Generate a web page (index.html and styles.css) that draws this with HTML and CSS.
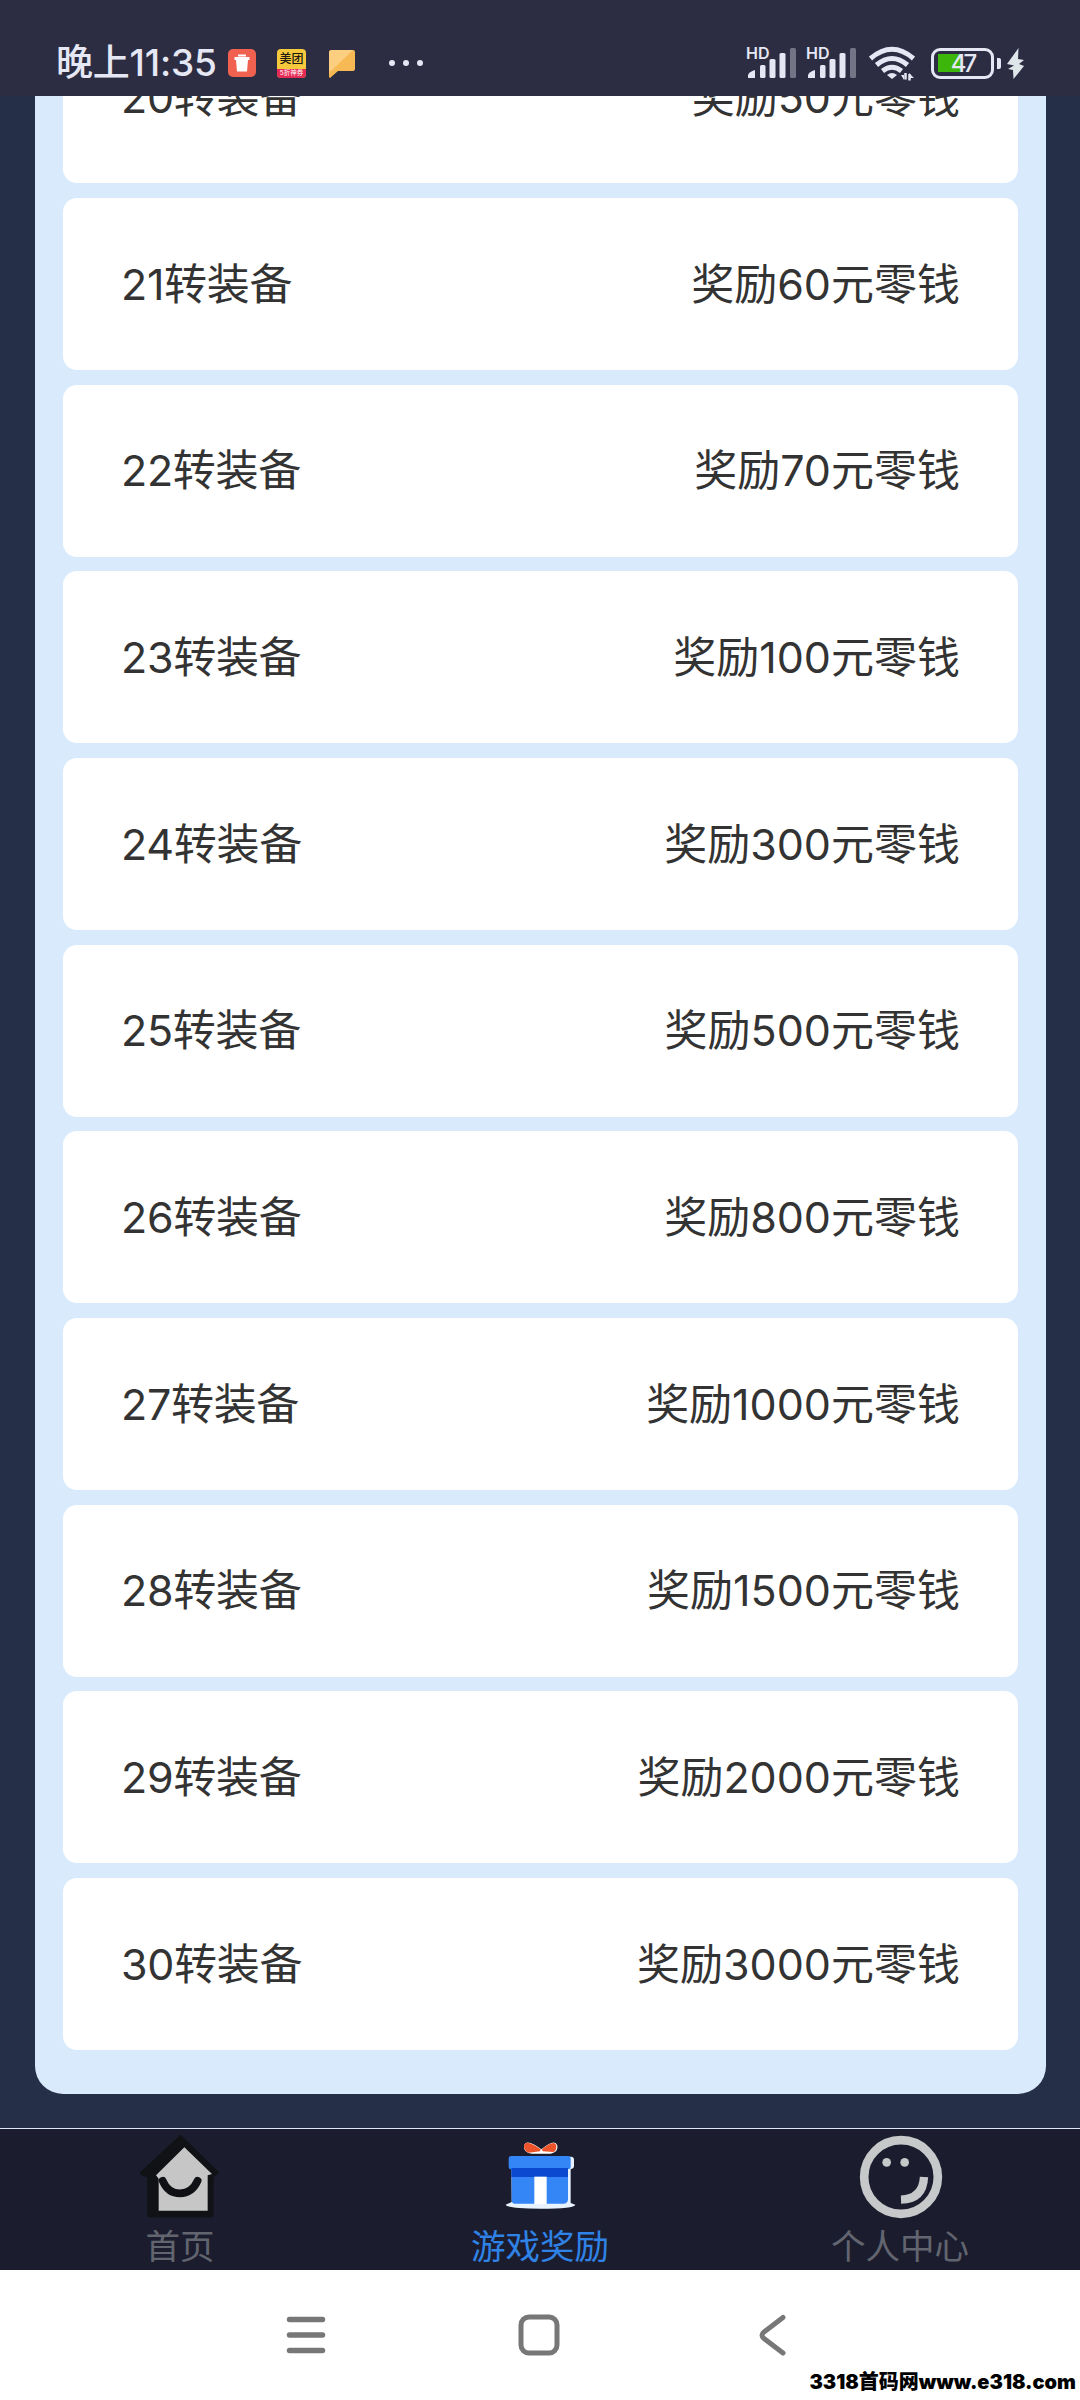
FILE: index.html
```html
<!DOCTYPE html>
<html lang="zh-CN">
<head>
    <meta charset="UTF-8">
    <meta name="viewport" content="width=device-width, initial-scale=1.0">
    <title>游戏奖励</title>
    <link rel="stylesheet" href="styles.css">
</head>
<body>
    <header class="status-bar">
        <span class="time">晚上11:35</span>
        <svg class="app-trash" width="28" height="28" viewBox="0 0 28 28">
            <rect width="28" height="28" rx="5" fill="#f0614f"/>
            <path d="M10 5.500h8v2h-8zM6.500 8h15v3h-1.500l-1 11.500h-10l-1-11.500h-1.500z" fill="#fff"/>
        </svg>
        <div class="app-meituan"><b>美团</b><small>5折神券</small></div>
        <svg class="app-note" width="26" height="29" viewBox="0 0 26 29">
            <path d="M2 1h22a2 2 0 0 1 2 2v17a2 2 0 0 1-2 2H9l-8 7-1-1V3a2 2 0 0 1 2-2z" fill="#f6b954"/>
            <path d="M2 1h22L2 22H0V3z" fill="#fbce80"/>
        </svg>
        <svg class="more" width="34" height="6" viewBox="0 0 34 6" fill="#e6e7f4">
            <circle cx="3" cy="3" r="3"/><circle cx="17" cy="3" r="3"/><circle cx="31" cy="3" r="3"/>
        </svg>

        <div class="status-right">
            <div class="signal">
                <span>HD</span>
                <svg width="50" height="32" viewBox="0 0 50 32" fill="#e6e7f4">
                    <path d="M2 31v-3q1-3 7-5v8z"/>
                    <rect x="14" y="18" width="5.500" height="13" rx="1.500"/>
                    <rect x="23.500" y="12" width="6" height="19" rx="1.500"/>
                    <rect x="33.500" y="6" width="6" height="25" rx="1.500"/>
                    <rect x="44" y="1" width="6" height="30" rx="1.500" fill="#737485"/>
                </svg>
            </div>
            <div class="signal">
                <span>HD</span>
                <svg width="50" height="32" viewBox="0 0 50 32" fill="#e6e7f4">
                    <path d="M2 31v-3q1-3 7-5v8z"/>
                    <rect x="14" y="18" width="5.500" height="13" rx="1.500"/>
                    <rect x="23.500" y="12" width="6" height="19" rx="1.500"/>
                    <rect x="33.500" y="6" width="6" height="25" rx="1.500"/>
                    <rect x="44" y="1" width="6" height="30" rx="1.500" fill="#737485"/>
                </svg>
            </div>
            <svg class="wifi" width="46" height="35" viewBox="0 0 46 35" fill="none" stroke="#e6e7f4" stroke-width="5">
                <path d="M1.500 12.500Q23-6 44.500 12.500"/>
                <path d="M7.500 19Q23 6 38.500 19"/>
                <path d="M13.500 25Q23 17.500 32.500 25"/>
                <path d="M23 33l-5-4q5-4 10 0z" fill="#e6e7f4" stroke="none"/>
                <path d="M36.500 27v6.500M40.500 34.500V28" stroke-width="2.500"/>
                <path d="M32 29h3v5zM45 32l-5-5v5z" fill="#e6e7f4" stroke="none"/>
            </svg>
            <div class="battery"><span>47</span></div>
            <svg class="bolt" width="17" height="31" viewBox="0 0 17 31">
                <path d="M11.500 0L0 16l7 1.500L1 21l5 1 .5 9L17 18l-5-2 5-4-6-1z" fill="#dfe6ea"/>
            </svg>
        </div>
    </header>

    <main class="content">
        <div class="panel">
            <div class="card"><span>20转装备</span><span>奖励50元零钱</span></div>
            <div class="card"><span>21转装备</span><span>奖励60元零钱</span></div>
            <div class="card"><span>22转装备</span><span>奖励70元零钱</span></div>
            <div class="card"><span>23转装备</span><span>奖励100元零钱</span></div>
            <div class="card"><span>24转装备</span><span>奖励300元零钱</span></div>
            <div class="card"><span>25转装备</span><span>奖励500元零钱</span></div>
            <div class="card"><span>26转装备</span><span>奖励800元零钱</span></div>
            <div class="card"><span>27转装备</span><span>奖励1000元零钱</span></div>
            <div class="card"><span>28转装备</span><span>奖励1500元零钱</span></div>
            <div class="card"><span>29转装备</span><span>奖励2000元零钱</span></div>
            <div class="card"><span>30转装备</span><span>奖励3000元零钱</span></div>
        </div>
    </main>

    <nav class="tab-bar">
        <div class="tab">
            <svg width="90" height="90" viewBox="105 57 270 270">
                <path d="M242 82L350 188l-15 10v118H148V198l-22-8z" fill="#111216" stroke="#111216" stroke-width="12" stroke-linejoin="round"/>
                <path d="M253 112l83 80-13 4v106H176V206l-8-10z" fill="#c6c6c6"/>
                <path d="M188 212q16 38 52 38t53-38" fill="none" stroke="#101114" stroke-width="23" stroke-linecap="round"/>
            </svg>
            <span>首页</span>
        </div>
        <div class="tab active">
            <svg width="90" height="90" viewBox="135 57 270 270">
                <path d="M274 118q-45-34-52-11-2 22 24 24h56q24-4 20-25-8-22-48 12z" fill="#fff"/>
                <path d="M272 118q-44-32-50-12 0 20 14 22l34-4zM276 118q36-30 43-12 1 17-9 20l-32-2z" fill="#ee5429"/>
                <path d="M184 140h180q8 1 8 9v20q-1 8-10 8v102l14 5q-3 12-104 12t-105-12l18-8z" fill="#e8f3ff"/>
                <path d="M184 138h170q8 0 8 8v26q0 6-8 6v90q0 12-12 13H195q-10 0-10-12v-91q-9 0-9-8v-24q0-8 8-8z" fill="#3486f7"/>
                <rect x="184" y="174" width="170" height="27" fill="#0b49d0"/>
                <rect x="253" y="200" width="37" height="82" fill="#fff"/>
            </svg>
            <span>游戏奖励</span>
        </div>
        <div class="tab">
            <svg width="90" height="90" viewBox="135 57 270 270" fill="#c6c8ca">
                <circle cx="273" cy="201" r="110.500" fill="none" stroke="#c6c8ca" stroke-width="26"/>
                <circle cx="230" cy="157" r="13"/>
                <circle cx="284" cy="157" r="13"/>
                <path d="M342 201q-3 66-69 68" fill="none" stroke="#c6c8ca" stroke-width="25"/>
            </svg>
            <span>个人中心</span>
        </div>
    </nav>

    <footer class="system-nav">
        <svg width="42" height="42" viewBox="0 0 42 42" fill="none" stroke="#777" stroke-width="5.500" stroke-linecap="round">
            <path d="M4.500 5.500h33M4.500 21h33M4.500 36.500h33"/>
        </svg>
        <svg width="42" height="42" viewBox="0 0 42 42" fill="none" stroke="#777" stroke-width="5">
            <rect x="3" y="3" width="36" height="36" rx="8"/>
        </svg>
        <svg width="42" height="42" viewBox="0 0 42 42" fill="none" stroke="#777" stroke-width="5" stroke-linecap="round">
            <path d="M32 3.500L13 18q-4 3 0 6.500L32 39"/>
        </svg>
        <div class="watermark">3318首码网www.e318.com</div>
    </footer>
</body>
</html>
```

FILE: styles.css
```css
* {
    box-sizing: border-box;
}

body {
    margin: 0;
    height: 2400px;
    display: flex;
    flex-direction: column;
    overflow: hidden;
    background-color: #252f48;
    font-family: Inter, "Noto Sans CJK SC", sans-serif;
}

svg {
    display: block;
    flex: none;
}

/* status bar */
.status-bar {
    height: 96px;
    flex: none;
    display: flex;
    align-items: center;
    padding: 30px 56px 0 56px;
    background-color: #2c2d42;
    color: #e6e7f4;
}

.time {
    width: 172px;
    font-size: 37px;
    font-weight: 500;
    letter-spacing: -0.2px;
    line-height: 40px;
    white-space: nowrap;
}

.app-meituan {
    width: 29px;
    height: 29px;
    margin: 0 23px 0 21px;
    border-radius: 4px;
    overflow: hidden;
    background-color: #f7c93d;
    color: #201a10;
    text-align: center;
}

.app-meituan b {
    display: block;
    height: 20px;
    font-size: 12px;
    font-weight: 500;
    line-height: 20px;
}

.app-meituan small {
    display: block;
    background-color: #e52a55;
    color: #fff;
    font-size: 6.5px;
    line-height: 9px;
    white-space: nowrap;
}

.more {
    margin-left: 34px;
}

.status-right {
    display: flex;
    align-items: center;
    margin-left: auto;
}

.signal {
    position: relative;
    margin-right: 10px;
}

.signal span {
    position: absolute;
    left: 0;
    top: 0;
    font-size: 16px;
    font-weight: 600;
    line-height: 12px;
}

.wifi {
    margin-left: 3px;
}

.battery {
    position: relative;
    width: 63px;
    height: 31px;
    margin: 0 13px 0 16px;
    padding: 4px;
    border: 3px solid #e6e7f4;
    border-radius: 9px;
    background: linear-gradient(#3db60c, #3db60c) 4px center / 24px 18px no-repeat;
    text-align: center;
}

.battery span {
    display: block;
    font-size: 24px;
    font-weight: 500;
    letter-spacing: -3px;
    line-height: 17px;
}

.battery::after {
    content: "";
    position: absolute;
    right: -10px;
    top: 7px;
    width: 4px;
    height: 11px;
    border-radius: 0 2px 2px 0;
    background-color: #e6e7f4;
}

/* reward list, scrolled to the end */
.content {
    flex: 1;
    min-height: 0;
    display: flex;
    flex-direction: column;
    justify-content: flex-end;
    overflow: hidden;
    padding: 0 34px 34px 35px;
}

.panel {
    display: flex;
    flex-direction: column;
    gap: 14.67px;
    padding: 28px 28px 44px;
    border-radius: 28px;
    background-color: #d9eafd;
}

.card {
    height: 172px;
    flex: none;
    display: flex;
    align-items: center;
    justify-content: space-between;
    padding: 0 58px 7px;
    border-radius: 14px;
    background-color: #fff;
    color: #333;
    font-size: 43px;
}

.card span:first-child {
    letter-spacing: -0.3px;
}

/* bottom tabs */
.tab-bar {
    height: 142px;
    flex: none;
    display: flex;
    border-top: 1px solid #dfe7fa;
    background-color: #1b1d2e;
}

.tab {
    flex: 1;
    display: flex;
    flex-direction: column;
    align-items: center;
    color: #62656f;
    font-size: 34.5px;
    line-height: 55px;
}

.active {
    color: #2f82e6;
}

.system-nav {
    position: relative;
    height: 130px;
    flex: none;
    display: flex;
    align-items: center;
    justify-content: center;
    gap: 191px;
    padding-right: 2px;
    background-color: #fff;
}

.watermark {
    position: absolute;
    right: 4px;
    bottom: 5px;
    color: #000;
    font-family: Inter, "Noto Sans CJK SC", sans-serif;
    font-size: 20px;
    font-weight: 900;
    line-height: 26px;
    white-space: nowrap;
}
```
